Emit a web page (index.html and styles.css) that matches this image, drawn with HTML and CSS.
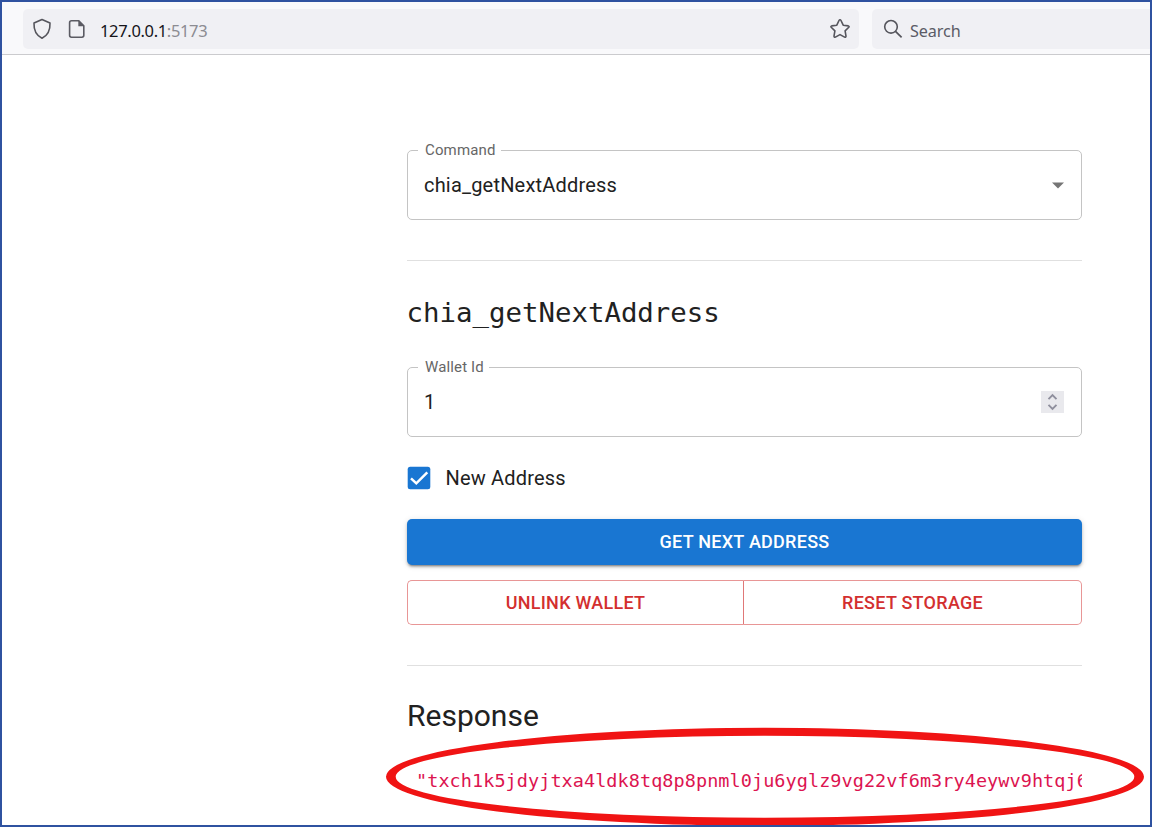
FILE: index.html
```html
<!DOCTYPE html>
<html lang="en">
<head>
<meta charset="utf-8">
<title>chia_getNextAddress</title>
<link rel="stylesheet" href="styles.css">
</head>
<body>
<div class="window">
  <header class="toolbar">
    <div class="url-bar">
      <svg class="icon" width="20" height="22" viewBox="0 0 20 22"><path d="M10 1.5 18 5.1C18.3 12 16 17.300 10 20.200 4 17.300 1.700 12 2 5.100Z" fill="none" stroke="#55555c" stroke-width="1.6" stroke-linejoin="round"/></svg>
      <svg class="icon page-icon" width="18" height="20" viewBox="0 0 18 20"><path d="M3.500 1.800H10.800L15.800 6.800V16.300a1.900 1.900 0 0 1-1.900 1.900H3.500a1.900 1.900 0 0 1-1.900-1.900V3.700a1.900 1.900 0 0 1 1.900-1.900Z" fill="none" stroke="#5b5b63" stroke-width="1.600"/><path d="M10.300 1.500V7.200H16.200Z" fill="#5b5b63"/></svg>
      <span class="url">127.0.0.1<span class="port">:5173</span></span>
      <svg class="icon star" width="22" height="22" viewBox="0 0 22 22"><path d="M11 1.700Q11.600 1.700 12 2.500L14.200 7.200 19.300 7.900Q20.600 8.300 19.800 9.300L16.100 12.900 17 18.100Q17 19.600 15.600 19.100L11 16.600 6.400 19.100Q5 19.600 5 18.100L5.900 12.900 2.200 9.300Q1.400 8.300 2.700 7.900L7.800 7.200 10 2.500Q10.400 1.700 11 1.700Z" fill="none" stroke="#55555c" stroke-width="1.600" stroke-linejoin="round"/></svg>
    </div>
    <div class="search-bar">
      <svg class="icon" width="20" height="20" viewBox="0 0 20 20"><circle cx="8" cy="7.800" r="6.300" fill="none" stroke="#55555c" stroke-width="1.600"/><path d="M12.500 12.300 18.600 18.400" stroke="#55555c" stroke-width="1.700"/></svg>
      <span class="search-text">Search</span>
    </div>
  </header>

  <main class="content">
    <div class="field">
      <span class="field-label">Command</span>
      <span class="field-value">chia_getNextAddress</span>
      <svg class="caret" width="12" height="7" viewBox="0 0 12 7"><path d="M0 .5H12L6 6.500Z" fill="#757575"/></svg>
    </div>
    <hr class="divider">
    <h1 class="title mono">chia_getNextAddress</h1>
    <div class="field">
      <span class="field-label">Wallet Id</span>
      <span class="field-value">1</span>
      <span class="spinner"><svg width="23" height="22" viewBox="0 0 23 22" fill="none" stroke="#8f8f9d" stroke-width="1.900"><path d="M7.500 8.200 11.500 4.200 15.500 8.200M7.500 13.800 11.500 17.800 15.500 13.800"/></svg></span>
    </div>
    <label class="check-row">
      <svg width="24" height="24" viewBox="0 0 24 24"><rect x=".7" y=".7" width="22.600" height="22.600" rx="2.500" fill="#1976d2"/><path d="M4 12.300 9.300 17.300 20.300 6.300" fill="none" stroke="#fff" stroke-width="2.500"/></svg>
      <span>New Address</span>
    </label>
    <button class="btn primary">GET NEXT ADDRESS</button>
    <div class="btn-group">
      <button class="btn outline">UNLINK WALLET</button>
      <button class="btn outline">RESET STORAGE</button>
    </div>
    <hr class="divider">
    <h2 class="title response">Response</h2>
    <pre class="code mono">"txch1k5jdyjtxa4ldk8tq8p8pnml0ju6yglz9vg22vf6m3ry4eywv9htqj6</pre>
  </main>

  <svg class="highlight" width="760" height="100" viewBox="385 727 760 100"><path fill="#f01414" fill-rule="evenodd" d="M386 776.800a379 49 0 0 1 758 0a379 49 0 0 1-758 0ZM395.700 776.800a369.300 41 0 0 0 738.600 0a369.300 41 0 0 0-738.600 0Z"/></svg>
</div>
</body>
</html>
```
FILE: styles.css
```css
* { box-sizing: border-box; }
body { margin: 0; }

.window {
  position: relative;
  width: 1152px;
  height: 827px;
  overflow: hidden;
  background: #fff;
  border: 2px solid #2f52a0;
  color: #212121;
  font-family: Roboto, "Liberation Sans", sans-serif;
  font-size: 20px;
}

.toolbar {
  display: flex;
  gap: 13px;
  height: 53px;
  padding: 7px 0 5px 21px;
  background: #f9f9fb;
  border-bottom: 1px solid #cbcbce;
  font-family: "Noto Sans", "Open Sans", sans-serif;
}
.url-bar, .search-bar {
  display: flex;
  align-items: center;
  height: 40px;
  background: #f0f0f4;
}
.url-bar { width: 836px; padding: 0 8px 0 9px; border-radius: 5px; }
.search-bar { flex: 1; padding-left: 11px; border-radius: 5px 0 0 5px; }
.icon { flex: none; }
.page-icon { margin-left: 16px; }
.url {
  margin: 3px 0 0 14px;
  font-size: 16.500px;
  letter-spacing: -0.340px;
  color: #15141a;
}
.port { color: #8c8c92; }
.star { margin-left: auto; }
.search-text {
  margin: 3px 0 0 7px;
  font-size: 16.200px;
  letter-spacing: -0.100px;
  color: #5b5b66;
}

.content {
  display: flex;
  flex-direction: column;
  width: 675px;
  margin: 95px 0 0 405px;
}
.field {
  position: relative;
  display: flex;
  align-items: center;
  justify-content: space-between;
  height: 70px;
  padding: 0 17px 0 16px;
  border: 1px solid #c4c4c4;
  border-radius: 5px;
}
.field-label {
  position: absolute;
  top: -10px;
  left: 10px;
  padding: 0 5px 0 7px;
  background: #fff;
  color: #666;
  font-size: 15px;
  line-height: 18px;
  letter-spacing: 0.140px;
}
.field-value { letter-spacing: 0.188px; }
.spinner { width: 23px; height: 22px; background: #e9e9ed; }
.spinner svg { display: block; }

.divider {
  width: 100%;
  height: 1px;
  margin: 40px 0;
  border: 0;
  background: #e0e0e0;
}
.mono { font-family: "DejaVu Sans Mono", "Liberation Mono", monospace; }
.title {
  height: 26px;
  margin: 0 0 40px -0.500px;
  font-size: 27.400px;
  font-weight: 400;
  line-height: 24px;
}
.check-row {
  display: flex;
  align-items: center;
  gap: 14.500px;
  height: 24px;
  margin: 29px 0;
  letter-spacing: 0.188px;
}
.btn {
  font: 500 18px Roboto, "Liberation Sans", sans-serif;
  letter-spacing: 0.270px;
}
.primary {
  height: 46px;
  padding-bottom: 3px;
  border: 0;
  border-radius: 5px;
  background: #1976d2;
  color: #fff;
  box-shadow: 0 3px 2px -2px rgba(0,0,0,.3), 0 2px 3px rgba(0,0,0,.2), 0 1px 6px rgba(0,0,0,.12);
}
.btn-group {
  display: grid;
  grid-template-columns: 336px 339px;
  height: 45px;
  margin-top: 15px;
}
.outline {
  border: 1px solid #e89696;
  background: #fff;
  color: #d32f2f;
}
.outline:first-child { border-radius: 5px 0 0 5px; border-right: 0; }
.outline:last-child { border-radius: 0 5px 5px 0; border-left-color: #e07878; }
.response {
  margin: 0 0 33px;
  font-size: 30px;
  line-height: 20px;
}
.code {
  margin: 0;
  padding-left: 9px;
  overflow: hidden;
  color: #dc1450;
  font-size: 18.500px;
  letter-spacing: 0.060px;
  line-height: 32px;
}
.highlight { position: absolute; left: 383px; top: 725px; }
```
